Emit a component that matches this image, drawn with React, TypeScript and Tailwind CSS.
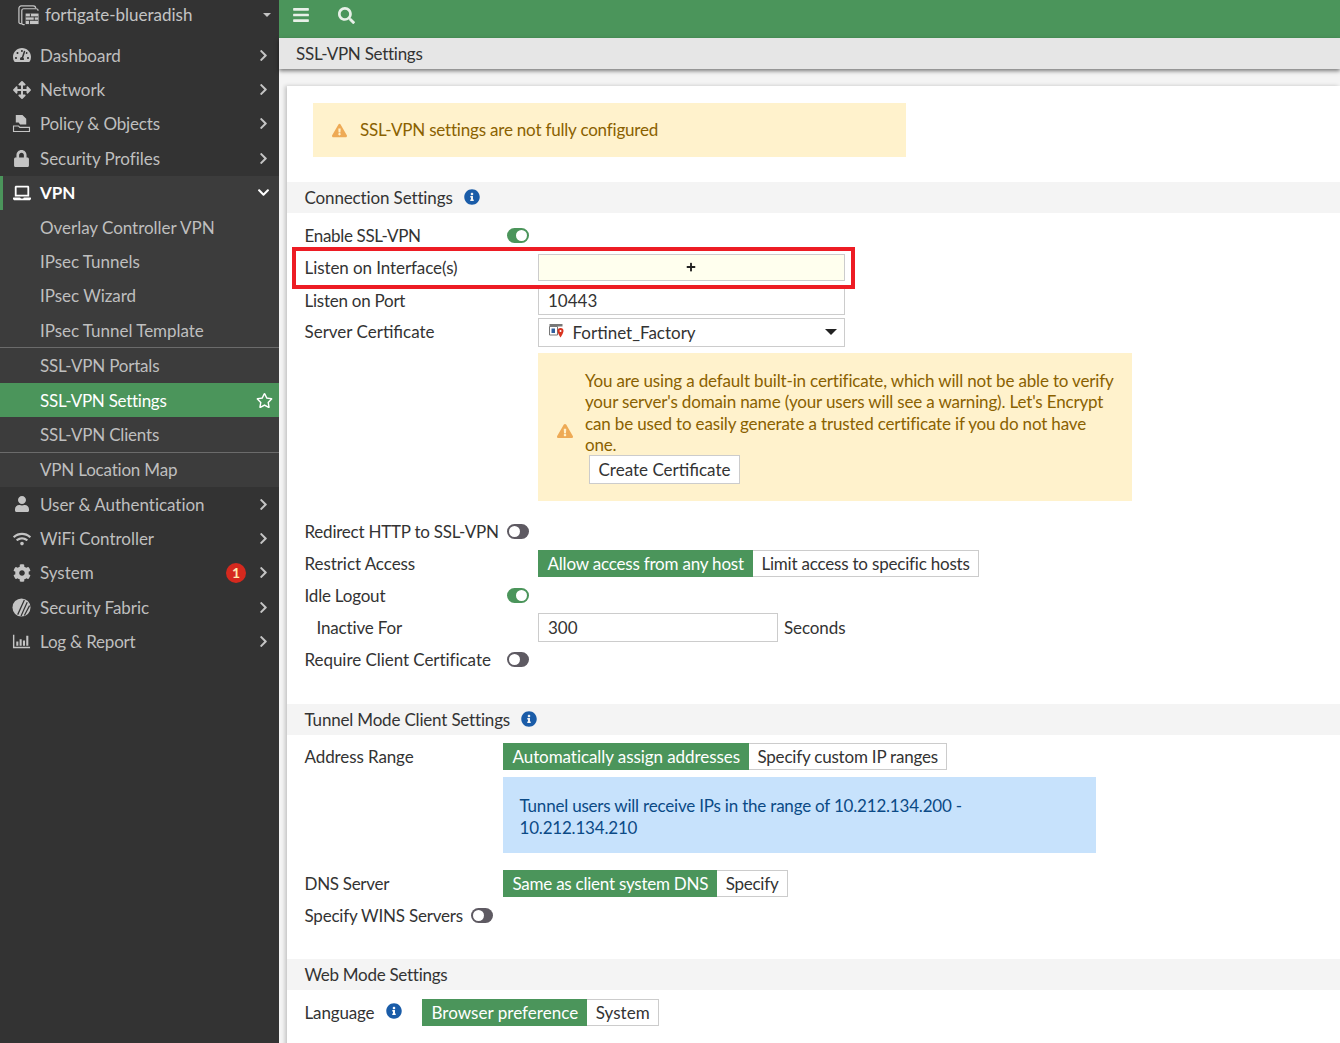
import type { ReactNode } from "react";
import {
  FaBars,
  FaChevronDown,
  FaChevronRight,
  FaCog,
  FaExclamationTriangle,
  FaInfoCircle,
  FaLaptop,
  FaLock,
  FaPlus,
  FaRegStar,
  FaSearch,
  FaTachometerAlt,
  FaUser,
  FaWifi,
  FaArrowsAlt,
} from "react-icons/fa";

function PolicyIcon() {
  return (
    <svg viewBox="0 0 20 20" className="w-[19px] h-[19px]" fill="currentColor">
      <path d="M4 1h7l4 4v6H8.500L7 9H4z" />
      <path d="M1 12h6l1.500 1.500H19V19H1zM2.200 13.200v4.600h15.600v-3.100H8L6.500 13.200z" fillRule="evenodd" />
    </svg>
  );
}

function FabricIcon() {
  return (
    <svg viewBox="0 0 20 20" className="w-[19px] h-[19px]">
      <circle cx="10" cy="10" r="9.500" fill="currentColor" />
      <path d="M6 17.500L13 2M9.500 19L16 4.500M13 18.500L18.500 8" stroke="#333333" strokeWidth="1.300" />
    </svg>
  );
}

function LogIcon() {
  return (
    <svg viewBox="0 0 20 20" className="w-[19px] h-[19px]" fill="currentColor">
      <path d="M1 3h1.500v12.500H19V17H1z" />
      <path d="M4.500 10h2.200v4.500H4.500zM8 7.500h2.200v7H8zM11.500 9h2.200v5.500h-2.200zM15 4h2.200v10.500H15z" />
    </svg>
  );
}

function DeviceIcon() {
  return (
    <svg viewBox="0 0 24 24" className="w-[23px] h-[23px]" fill="none" stroke="currentColor" strokeWidth="1.300">
      <path d="M5 21.500H3.500A1.500 1.500 0 0 1 2 20V5.500A2.500 2.500 0 0 1 4.500 3H17a2.500 2.500 0 0 1 2.500 2.500" />
      <path d="M8 22.500H6.500A1.500 1.500 0 0 1 5 21V8a2 2 0 0 1 2-2h13a2 2 0 0 1 2 2" />
      <path d="M9 11h13.500v11H9z" fill="currentColor" stroke="none" />
      <path d="M9 14.500h13M9 18h13M14 11v3.500M18 14.500V18M13 18v4" stroke="#333333" strokeWidth="1" />
    </svg>
  );
}

function CertIcon() {
  return (
    <svg viewBox="0 0 16 16" className="w-[16px] h-[16px] -mt-[3px]">
      <path d="M.500 1h13v2.500H.500z" fill="#777777" />
      <path d="M.500 3.500h8v8.500h-8z" fill="#ffffff" stroke="#777777" />
      <path d="M2.500 5.500h3.500V10H2.500z" fill="#2f5f9e" />
      <path d="M11.500 5a3 3 0 0 1 3 3c0 2-3 6.500-3 6.500s-3-4.500-3-6.500a3 3 0 0 1 3-3z" fill="#d9331f" />
      <circle cx="11.500" cy="8" r="1" fill="#ffffff" />
    </svg>
  );
}

function Caret({ className }: { className: string }) {
  return (
    <svg viewBox="0 0 12 6" className={className} fill="currentColor">
      <path d="M0 0h12L6 6z" />
    </svg>
  );
}

function NavRow({ icon, label, badge, tc }: { icon: ReactNode; label: string; badge?: string; tc?: string }) {
  return (
    <div className="h-[34.400px] flex items-center pl-[12px] pr-[9px] text-[#bfbfbf]">
      <span className="w-[19px] flex justify-center text-[#c4c4c4]">{icon}</span>
      <span className={"ml-[9px] flex-1 " + (tc ?? "")}>{label}</span>
      {badge && (
        <span className="w-[20px] h-[20px] mr-[11px] rounded-full bg-[#d5291e] text-[#ffe9b0] text-[14px] font-bold flex items-center justify-center">
          {badge}
        </span>
      )}
      <FaChevronRight className="text-[13px] text-[#c4c4c4]" />
    </div>
  );
}

function SubRow({ label, active, tc }: { label: string; active?: boolean; tc?: string }) {
  return (
    <div
      className={
        active
          ? "h-[34.300px] flex items-center pl-[40px] pr-[6px] bg-[#4b955b] text-white"
          : "h-[34.300px] flex items-center pl-[40px] text-[#bfbfbf]"
      }
    >
      <span className={"flex-1 " + (tc ?? "")}>{label}</span>
      {active && <FaRegStar className="text-[17px] text-white" />}
    </div>
  );
}

function Sidebar() {
  return (
    <aside className="w-[279px] shrink-0 bg-[#333333] text-[17px] leading-none tracking-[-0.03px]">
      <div className="h-[38px] flex items-center pb-[9px] pl-[17px] pr-[8px] text-[#c4c4c4] tracking-[0px]">
        <DeviceIcon />
        <span className="ml-[5px] flex-1">fortigate-blueradish</span>
        <Caret className="w-[8px] h-[4px]" />
      </div>
      <NavRow icon={<FaTachometerAlt className="text-[18px]" />} label="Dashboard" />
      <NavRow icon={<FaArrowsAlt className="text-[18px]" />} label="Network" />
      <NavRow icon={<PolicyIcon />} label="Policy & Objects" tc="tracking-[-0.15px]" />
      <NavRow icon={<FaLock className="text-[17px]" />} label="Security Profiles" />
      <div className="bg-[#3c3c3c]">
        <div className="h-[34.500px] flex items-center pl-[12px] pr-[9px] border-l-[3px] border-[#4b955b] text-white font-bold">
          <span className="w-[19px] -ml-[3px] flex justify-center">
            <FaLaptop className="text-[18px]" />
          </span>
          <span className="ml-[9px] flex-1">VPN</span>
          <FaChevronDown className="text-[13px]" />
        </div>
        <SubRow label="Overlay Controller VPN" />
        <SubRow label="IPsec Tunnels" />
        <SubRow label="IPsec Wizard" />
        <SubRow label="IPsec Tunnel Template" />
        <div className="border-t border-[#6b6b6b] mb-[0.500px]" />
        <SubRow label="SSL-VPN Portals" tc="tracking-[-0.2px]" />
        <SubRow label="SSL-VPN Settings" active tc="tracking-[-0.27px]" />
        <SubRow label="SSL-VPN Clients" tc="tracking-[-0.2px]" />
        <div className="border-t border-[#6b6b6b]" />
        <SubRow label="VPN Location Map" tc="tracking-[-0.2px]" />
      </div>
      <NavRow icon={<FaUser className="text-[16px]" />} label="User & Authentication" />
      <NavRow icon={<FaWifi className="text-[18px]" />} label="WiFi Controller" />
      <NavRow icon={<FaCog className="text-[18px]" />} label="System" badge="1" />
      <NavRow icon={<FabricIcon />} label="Security Fabric" />
      <NavRow icon={<LogIcon />} label="Log & Report" tc="tracking-[-0.2px]" />
    </aside>
  );
}

function Toggle({ on }: { on?: boolean }) {
  return (
    <span
      className={
        on
          ? "w-[22px] h-[15px] rounded-full bg-[#4b955b] flex items-center justify-end pr-[2px]"
          : "w-[22px] h-[15px] rounded-full bg-[#5e5a62] flex items-center pl-[2px]"
      }
    >
      <span className="w-[11px] h-[11px] rounded-full bg-white" />
    </span>
  );
}

function Row({ label, width, tc, children }: { label: ReactNode; width: number; tc?: string; children?: ReactNode }) {
  return (
    <div className="h-[32px] flex items-center pl-[17.500px]">
      <div className={tc} style={{ width }}>
        {label}
      </div>
      {children}
    </div>
  );
}

function Section({ title, info, tc }: { title: string; info?: boolean; tc: string }) {
  return (
    <div className="h-[31px] bg-[#f4f4f4] flex items-center pl-[17.500px]">
      <span className={tc}>{title}</span>
      {info && <FaInfoCircle className="ml-[11px] -mt-[2px] text-[16px] text-[#1a5ca8]" />}
    </div>
  );
}

function Segment({ on, off, onTc, offTc }: { on: string; off: string; onTc?: string; offTc?: string }) {
  return (
    <div className="flex h-[27px]">
      <span className={"bg-[#4b955b] text-white pl-[10px] pr-[9px] flex items-center " + (onTc ?? "")}>{on}</span>
      <span className={"border border-l-0 border-[#cccccc] pl-[8.500px] pr-[8.500px] flex items-center " + (offTc ?? "")}>{off}</span>
    </div>
  );
}

function Content() {
  return (
    <main className="relative ml-[8px] mt-[17px] flex-1 bg-white text-[17px] leading-none text-[#333333] shadow-[-2px_0_4px_rgba(0,0,0,0.2)] pb-[20px]">
      <div className="h-[54px] w-[593px] ml-[26px] mt-[17px] bg-[#fff2cc] flex items-center pl-[19px] text-[#8a6100] tracking-[-0.2px]">
        <FaExclamationTriangle className="text-[15px] text-[#eeaa55]" />
        <span className="ml-[13px] -mt-[2px]">SSL-VPN settings are not fully configured</span>
      </div>
      <div className="mt-[25px]">
        <Section title="Connection Settings" info tc="tracking-[-0.13px]" />
      </div>
      <div className="mt-[6px]">
        <Row label="Enable SSL-VPN" width={202} tc="tracking-[-0.33px]">
          <Toggle on />
        </Row>
        <Row label="Listen on Interface(s)" width={233} tc="tracking-[-0.08px]">
          <div className="w-[307px] h-[27px] border border-[#cccccc] bg-[#ffffee] flex items-center justify-center text-[#222222]">
            <FaPlus className="text-[10px]" />
          </div>
        </Row>
        <div className="mt-[1px]">
          <Row label="Listen on Port" width={233} tc="tracking-[-0.25px]">
            <div className="w-[307px] h-[29px] border border-[#cccccc] flex items-center pl-[9.500px]">10443</div>
          </Row>
        </div>
        <Row label={<span className="block -mt-[1px]">Server Certificate</span>} width={233}>
          <div className="w-[307px] h-[29px] border border-[#cccccc] flex items-center pl-[10px] pr-[7px]">
            <CertIcon />
            <span className="ml-[8px] flex-1">Fortinet_Factory</span>
            <Caret className="w-[12px] h-[6px] text-[#222222]" />
          </div>
        </Row>
      </div>
      <div className="ml-[251px] mt-[5px] w-[594px] h-[148px] bg-[#fff2cc] flex items-center pl-[19px] text-[#8a6100] tracking-[-0.16px]">
        <FaExclamationTriangle className="shrink-0 text-[16px] text-[#eeaa55] mt-[8px]" />
        <div className="ml-[12px] w-[530px] leading-[21.250px]">
          <div>
            You are using a default built-in certificate, which will not be able to verify your server's domain name (your users will see a warning). Let's Encrypt can be used to easily generate a trusted certificate if you do not have one.
          </div>
          <div className="ml-[4px] w-[151px] h-[29px] bg-white border border-[#cccccc] flex items-center justify-center text-[#333333] tracking-[0px]">
            Create Certificate
          </div>
        </div>
      </div>
      <div className="mt-[14px]">
        <Row label="Redirect HTTP to SSL-VPN" width={202} tc="tracking-[-0.23px]">
          <Toggle />
        </Row>
        <Row label="Restrict Access" width={233} tc="tracking-[-0.07px]">
          <Segment on="Allow access from any host" off="Limit access to specific hosts" onTc="tracking-[-0.2px]" offTc="tracking-[-0.2px]" />
        </Row>
        <Row label="Idle Logout" width={202} tc="tracking-[-0.2px]">
          <Toggle on />
        </Row>
        <Row label={<span className="pl-[12px]">Inactive For</span>} width={233} tc="tracking-[-0.15px]">
          <div className="w-[240px] h-[29px] border border-[#cccccc] flex items-center pl-[9.500px]">300</div>
          <span className="ml-[6.500px] tracking-[-0.1px]">Seconds</span>
        </Row>
        <Row label="Require Client Certificate" width={202} tc="tracking-[-0.05px]">
          <Toggle />
        </Row>
      </div>
      <div className="mt-[29px]">
        <Section title="Tunnel Mode Client Settings" info tc="tracking-[-0.18px]" />
      </div>
      <div className="mt-[5px]">
        <Row label="Address Range" width={198} tc="tracking-[-0.1px]">
          <Segment on="Automatically assign addresses" off="Specify custom IP ranges" onTc="tracking-[-0.07px]" offTc="tracking-[-0.2px]" />
        </Row>
      </div>
      <div className="ml-[216px] mt-[5px] w-[593px] h-[76px] bg-[#c7e2fc] flex items-center pt-[3px] pl-[16.500px] pr-[100px] text-[#0b4a86] leading-[22px] tracking-[-0.2px]">
        Tunnel users will receive IPs in the range of 10.212.134.200 - 10.212.134.210
      </div>
      <div className="mt-[14px]">
        <Row label="DNS Server" width={198} tc="tracking-[-0.3px]">
          <Segment on="Same as client system DNS" off="Specify" onTc="tracking-[-0.24px]" offTc="tracking-[-0.25px]" />
        </Row>
        <Row label="Specify WINS Servers" width={166} tc="tracking-[-0.2px]">
          <Toggle />
        </Row>
      </div>
      <div className="mt-[28px]">
        <Section title="Web Mode Settings" tc="tracking-[-0.28px]" />
      </div>
      <div className="mt-[6px]">
        <Row
          width={117}
          tc="tracking-[-0.15px]"
          label={
            <span className="flex items-center">
              Language
              <FaInfoCircle className="ml-[12px] -mt-[2px] text-[16px] text-[#1a5ca8]" />
            </span>
          }
        >
          <Segment on="Browser preference" off="System" onTc="tracking-[0.03px]" offTc="tracking-[0.05px]" />
        </Row>
      </div>
      <div className="absolute left-[5px] top-[161px] w-[563px] h-[42px] border-4 border-[#ed1c24]" />
    </main>
  );
}

export default function App() {
  return (
    <div className="h-[1043px] overflow-hidden flex bg-[#f4f4f4] font-['Lato',sans-serif]">
      <Sidebar />
      <div className="flex-1 flex flex-col min-w-0">
        <header className="h-[38px] shrink-0 bg-[#4b955b] flex items-center pb-[8px] pl-[13px] text-[#e8f0e8]">
          <FaBars className="text-[18px]" />
          <FaSearch className="ml-[28px] text-[17px]" />
        </header>
        <div className="h-[31px] shrink-0 bg-[#e6e6e6] flex items-center pl-[17px] text-[17px] tracking-[-0.27px] text-[#333333] shadow-[0_2px_4px_rgba(0,0,0,0.5)] z-10">
          SSL-VPN Settings
        </div>
        <Content />
      </div>
    </div>
  );
}
